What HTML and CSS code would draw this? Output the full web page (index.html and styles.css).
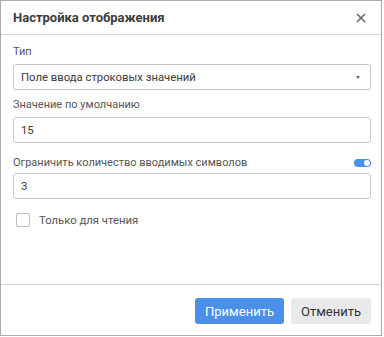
FILE: index.html
```html
<!DOCTYPE html>
<html>
<head>
    <meta charset='utf-8'>
    <title>Настройка отображения</title>
    <link rel="stylesheet" href="styles.css">
</head>
<body>
    <div class="dialog">
        <div class="header">
            <span class="title">Настройка отображения</span>
            <span class="close">
                <svg width="10" height="10" viewBox="0 0 10 10">
                    <path d="M1 1L9 9M9 1L1 9" stroke="#666" stroke-width="1.6"/>
                </svg>
            </span>
        </div>

        <div class="content">
            <div class="group">
                <div class="label">Тип</div>
                <div class="field select">
                    <span>Поле ввода строковых значений</span>
                    <span class="arrow"></span>
                </div>
            </div>

            <div class="group">
                <div class="label">Значение по умолчанию</div>
                <div class="field">15</div>
            </div>

            <div class="group group-toggle">
                <div class="label label-row">
                    <span>Ограничить количество вводимых символов</span>
                    <span class="toggle"><span class="knob"></span></span>
                </div>
                <div class="field">3</div>
            </div>

            <div class="check">
                <span class="box"></span>
                <span>Только для чтения</span>
            </div>
        </div>

        <div class="footer">
            <button class="btn btn-primary">Применить</button>
            <button class="btn btn-cancel">Отменить</button>
        </div>
    </div>
</body>
</html>
```

FILE: styles.css
```css
body {
    margin: 0;
    font-family: Roboto, "Liberation Sans", sans-serif;
    background-color: #fff;
    color: #333;
}
.dialog {
    width: 382px;
    height: 336px;
    box-sizing: border-box;
    border: 1px solid #aaa;
    display: flex;
    flex-direction: column;
}
.header {
    height: 33px;
    border-bottom: 1px solid #d2d2da;
    display: flex;
    align-items: center;
    justify-content: space-between;
    padding: 0 15px 0 12px;
}
.title {
    font-size: 13px;
    font-weight: bold;
    color: #3c3c3c;
}
.close {
    display: flex;
    padding-top: 1px;
}
.content {
    flex: 1;
    padding: 10px 10px 0 12px;
}
.group {
    margin-bottom: 8px;
}
.group-toggle {
    margin-top: 13px;
}
.label {
    font-size: 11px;
    line-height: 14px;
    color: #555;
    margin-bottom: 5px;
}
.label-row {
    display: flex;
    justify-content: space-between;
    align-items: center;
    margin-bottom: 3px;
}
.toggle {
    width: 17px;
    height: 8px;
    border-radius: 4px;
    background-color: #4a8fe8;
    display: flex;
    justify-content: flex-end;
    align-items: center;
    padding: 0 1px;
    box-sizing: border-box;
}
.knob {
    width: 6px;
    height: 6px;
    border-radius: 50%;
    background-color: #fff;
}
.field {
    height: 26px;
    box-sizing: border-box;
    border: 1px solid #c8c8c8;
    border-radius: 3px;
    padding: 1px 7px 0;
    font-size: 11.3px;
    display: flex;
    align-items: center;
    color: #3a3a3a;
}
.select {
    justify-content: space-between;
    padding-right: 10px;
}
.arrow {
    width: 0;
    height: 0;
    border-left: 2.5px solid transparent;
    border-right: 2.5px solid transparent;
    border-top: 3px solid #666;
}
.check {
    display: flex;
    align-items: center;
    margin-top: 14px;
    padding-left: 3px;
    font-size: 11.3px;
    color: #555;
}
.box {
    width: 14px;
    height: 14px;
    box-sizing: border-box;
    border: 1.5px solid #bbb;
    border-radius: 2px;
    margin-right: 9px;
}
.footer {
    height: 48px;
    border-top: 1px solid #d2d2da;
    display: flex;
    justify-content: flex-end;
    align-items: center;
    gap: 7px;
    padding: 2px 10px 0;
}
.btn {
    height: 26px;
    width: 89px;
    border: none;
    border-radius: 3px;
    background-color: #e8e9eb;
    color: #333;
    font-family: Roboto, "Liberation Sans", sans-serif;
    font-size: 13px;
    padding: 0;
}
.btn-primary {
    background-color: #4a90e9;
    color: #fff;
}
.btn-cancel {
    width: 80px;
}
```
